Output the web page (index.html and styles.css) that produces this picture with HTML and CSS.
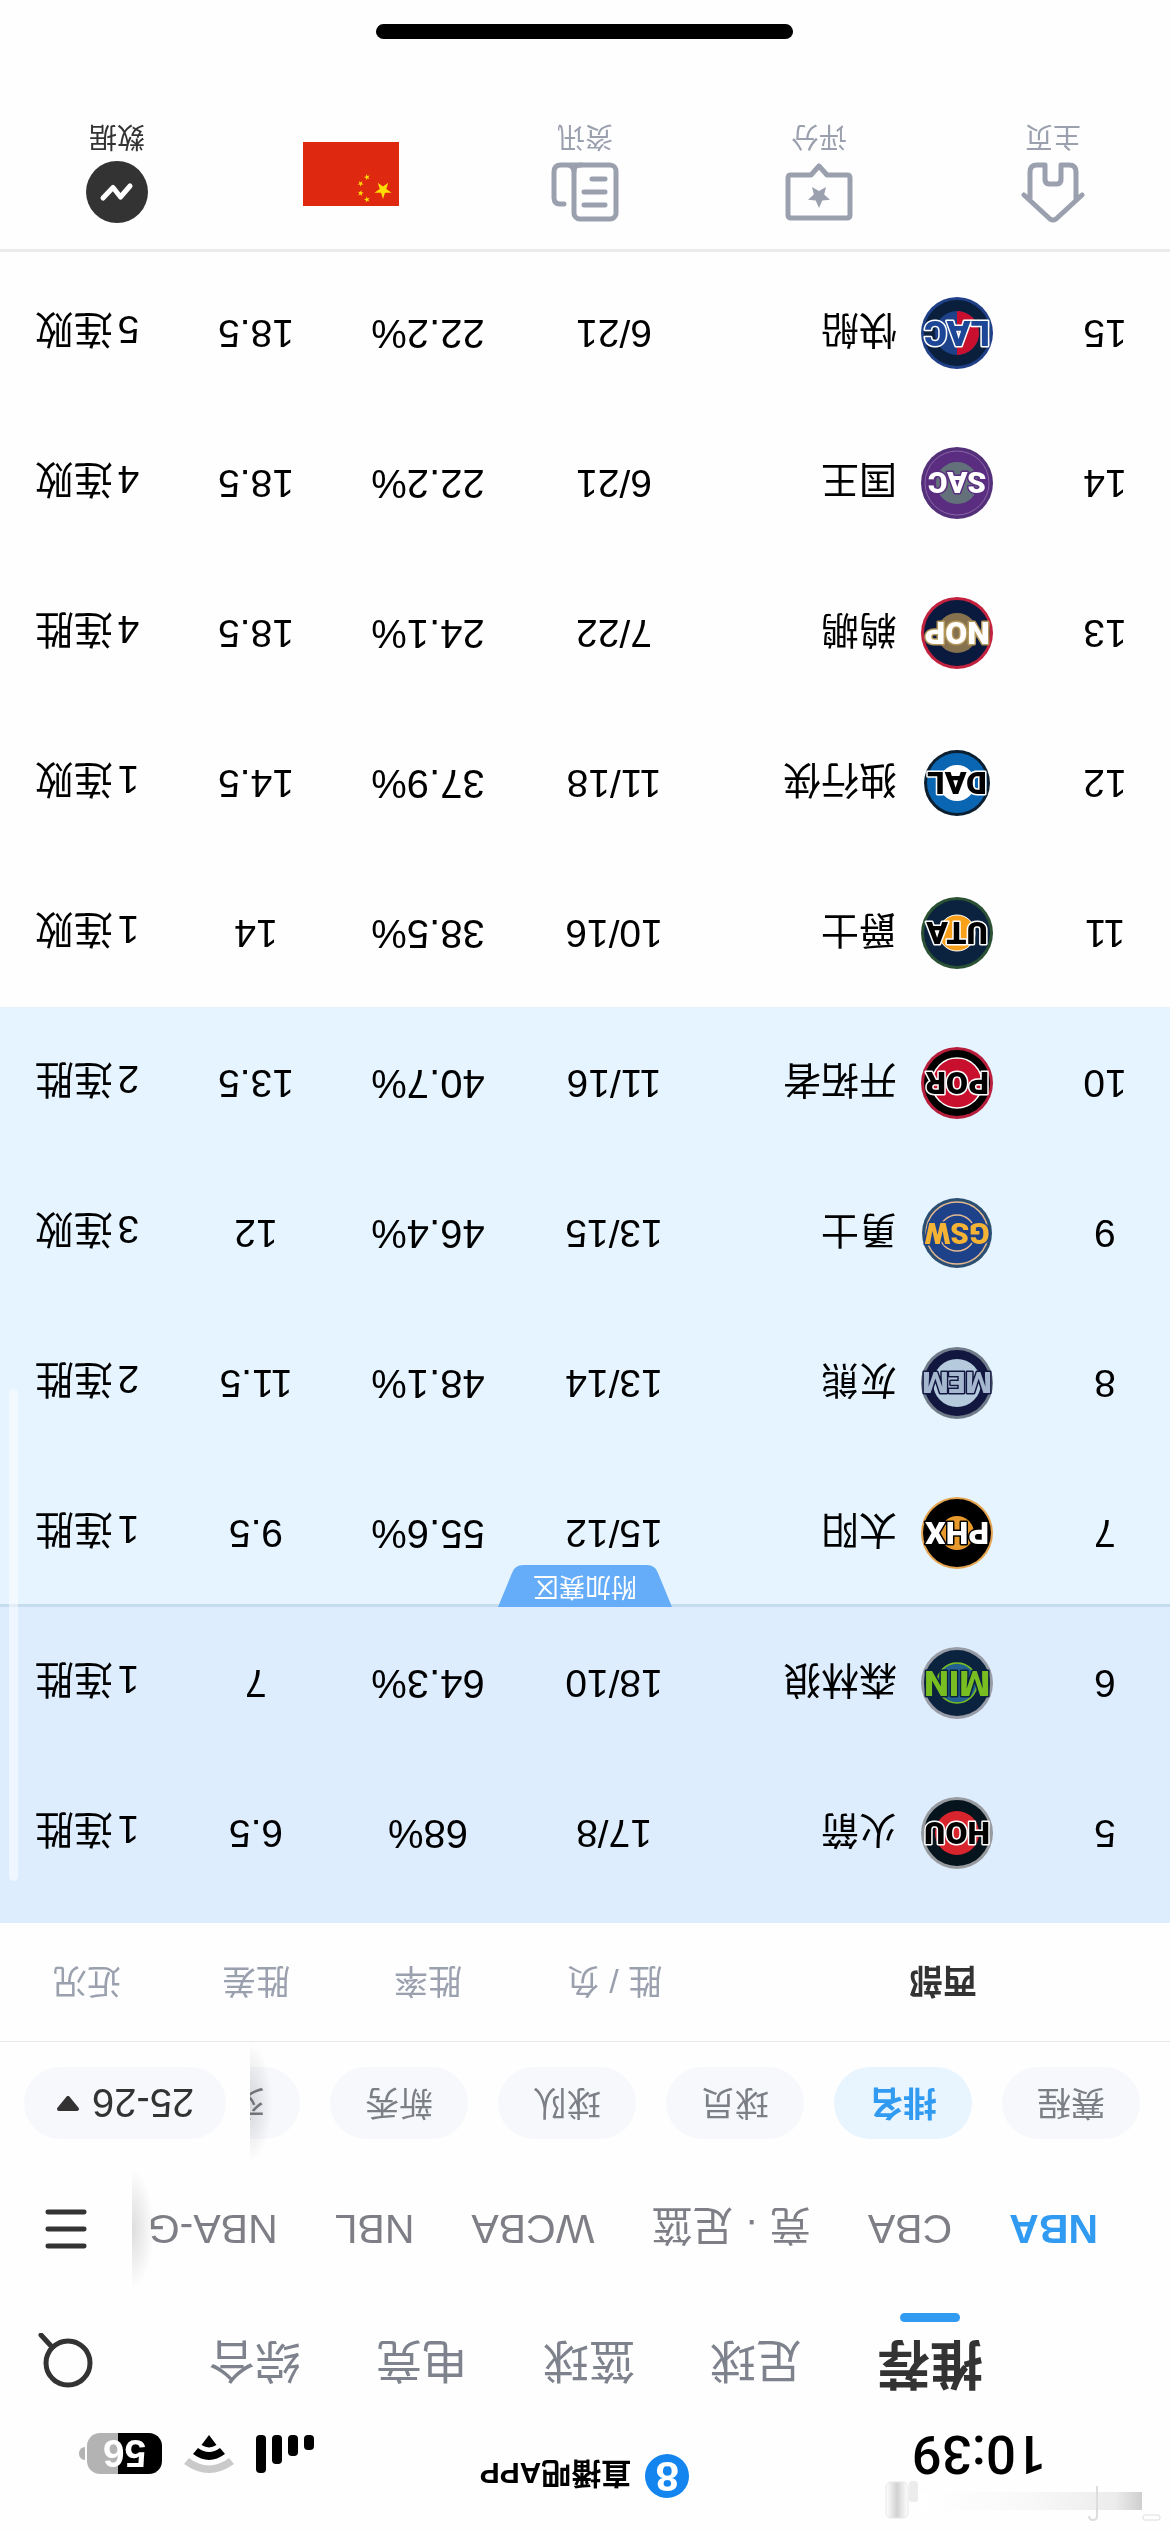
FILE: index.html
```html
<!DOCTYPE html>
<html lang="zh-CN">
<head>
    <meta charset="UTF-8">
    <meta name="viewport" content="width=device-width, initial-scale=1.0">
    <title>NBA 排名</title>
    <link rel="stylesheet" href="styles.css">
</head>
<body>
<div class="screen">
    <svg class="smudge" viewBox="0 0 290 44" aria-hidden="true">
        <defs>
            <linearGradient id="fade" x1="0" x2="1">
                <stop offset="0" stop-color="#cfcfcf"/>
                <stop offset="0.12" stop-color="#ececec"/>
                <stop offset="0.5" stop-color="#f8f8f8"/>
                <stop offset="1" stop-color="#fff"/>
            </linearGradient>
            <linearGradient id="bar" x1="0" x2="1">
                <stop offset="0" stop-color="#fff"/>
                <stop offset="0.5" stop-color="#d2d2d2"/>
                <stop offset="1" stop-color="#fff"/>
            </linearGradient>
        </defs>
        <rect x="28" y="12" width="222" height="18" fill="url(#fade)"/>
        <rect x="10" y="2" width="17" height="5" rx="2" fill="#fff" stroke="#ddd"/>
        <path d="M73 36V6q0-4 4-4t4 4" fill="none" stroke="#ddd" stroke-width="2"/>
        <rect x="262" y="4" width="22" height="36" rx="5" fill="url(#bar)" stroke="#e6e6e6"/>
        <rect x="252" y="20" width="9" height="21" rx="3" fill="#ececec"/>
    </svg>

    <header class="status">
        <time class="clock">10:39</time>
        <div class="brand">
            <span class="brand-logo">8</span>
            <span>直播吧APP</span>
        </div>
        <div class="status-icons">
            <svg width="58" height="38" viewBox="0 0 58 38">
                <rect x="0" y="23" width="10" height="15" rx="4"/>
                <rect x="16" y="17" width="10" height="21" rx="4"/>
                <rect x="32" y="9" width="10" height="29" rx="4"/>
                <rect x="48" y="0" width="10" height="38" rx="4"/>
            </svg>
            <svg width="50" height="38" viewBox="0 0 50 38">
                <path d="M0 9Q25-9 50 9L45 15Q25 0 5 15Z" fill="#cacaca"/>
                <path d="M9 19Q25 7 41 19L36 25Q25 17 14 25Z"/>
                <path d="M17.500 28Q25 23 32.500 28L25 38Z"/>
            </svg>
            <span class="battery">56</span>
        </div>
    </header>

    <nav class="tabs">
        <div class="tab-list">
            <a href="#" class="active">推荐</a>
            <a href="#">足球</a>
            <a href="#">篮球</a>
            <a href="#">电竞</a>
            <a href="#">综合</a>
        </div>
        <button class="icon-btn search" aria-label="搜索">
            <svg width="56" height="56" viewBox="0 0 56 56">
                <circle cx="26" cy="26" r="22"/>
                <path d="M42 42L53 54"/>
            </svg>
        </button>
    </nav>

    <nav class="leagues">
        <div class="league-list">
            <a href="#" class="active">NBA</a>
            <a href="#">CBA</a>
            <a href="#">竞 · 足篮</a>
            <a href="#">WCBA</a>
            <a href="#">NBL</a>
            <a href="#">NBA-G</a>
        </div>
        <div class="side">
            <button class="icon-btn menu" aria-label="菜单">
                <svg width="42" height="40" viewBox="0 0 42 40">
                    <path d="M3 3H39M3 20H39M3 37H39"/>
                </svg>
            </button>
        </div>
    </nav>

    <nav class="chips">
        <div class="chip-list">
            <a href="#">赛程</a>
            <a href="#" class="active">排名</a>
            <a href="#">球员</a>
            <a href="#">球队</a>
            <a href="#">新秀</a>
            <a href="#">交易</a>
        </div>
        <div class="side">
            <button class="season">
                25-26
                <svg width="24" height="16" viewBox="0 0 24 16">
                    <path d="M3 2H21L12 13Z"/>
                </svg>
            </button>
        </div>
    </nav>

    <main class="standings">
        <table>
            <colgroup>
                <col class="col-rank">
                <col>
                <col class="col-record">
                <col class="col-rate">
                <col class="col-diff">
                <col class="col-streak">
            </colgroup>
            <thead>
                <tr>
                    <th></th>
                    <th class="conf">西部</th>
                    <th>胜 / 负</th>
                    <th>胜率</th>
                    <th>胜差</th>
                    <th>近况</th>
                </tr>
            </thead>
            <tbody class="playoff">
                <tr class="peek"><td colspan="6"></td></tr>
                <tr>
                    <td>5</td>
                    <td><div class="team">
                        <svg class="logo" viewBox="0 0 72 72"><circle cx="36" cy="36" r="36" fill="#979b9f"/><circle cx="36" cy="36" r="33" fill="#06141d"/><circle cx="36" cy="36" r="22" fill="#d8242d"/><text x="36" y="47" fill="#000" stroke="#fff">HOU</text></svg>
                        火箭</div></td>
                    <td>17/8</td><td class="rate">68%</td><td>6.5</td><td>1连胜</td>
                </tr>
                <tr>
                    <td>6</td>
                    <td><div class="team">
                        <svg class="logo" viewBox="0 0 72 72"><circle cx="36" cy="36" r="36" fill="#979ca6"/><circle cx="36" cy="36" r="33" fill="#0c2340"/><circle cx="36" cy="36" r="20" fill="#236192" stroke="#78be20" stroke-width="1.500"/><text class="narrow" x="36" y="48" fill="#78be20" stroke="#0c2340">MIN</text></svg>
                        森林狼</div></td>
                    <td>18/10</td><td class="rate">64.3%</td><td>7</td><td>1连胜</td>
                </tr>
            </tbody>
            <tbody class="playin">
                <tr class="zone-row">
                    <td>7<span class="zone">附加赛区</span></td>
                    <td><div class="team">
                        <svg class="logo" viewBox="0 0 72 72"><circle cx="36" cy="36" r="36" fill="#e5a550"/><circle cx="36" cy="36" r="34" fill="#000"/><circle cx="36" cy="36" r="17" fill="#e79a2b"/><text x="36" y="47" fill="#fff" stroke="#000">PHX</text></svg>
                        太阳</div></td>
                    <td>15/12</td><td class="rate">55.6%</td><td>9.5</td><td>1连胜</td>
                </tr>
                <tr>
                    <td>8</td>
                    <td><div class="team">
                        <svg class="logo" viewBox="0 0 72 72"><circle cx="36" cy="36" r="36" fill="#707b8a"/><circle cx="36" cy="36" r="33" fill="#12173f"/><circle cx="36" cy="36" r="24" fill="#b5cadd"/><text class="wide" x="36" y="47" fill="#a5b6cf" stroke="#12173f">MEM</text></svg>
                        灰熊</div></td>
                    <td>13/14</td><td class="rate">48.1%</td><td>11.5</td><td>2连胜</td>
                </tr>
                <tr>
                    <td>9</td>
                    <td><div class="team">
                        <svg class="logo" viewBox="0 0 72 72"><circle cx="36" cy="36" r="35" fill="#2b4f73"/><circle cx="36" cy="36" r="31" fill="#1d428a" stroke="#e6b98f" stroke-width="1.500"/><circle cx="36" cy="36" r="18" fill="none" stroke="#e6b98f" stroke-width="1.500"/><text class="wide" x="36" y="46" fill="#f5b335" stroke="#1d428a">GSW</text></svg>
                        勇士</div></td>
                    <td>13/15</td><td class="rate">46.4%</td><td>12</td><td>3连败</td>
                </tr>
                <tr>
                    <td>10</td>
                    <td><div class="team">
                        <svg class="logo" viewBox="0 0 72 72"><circle cx="36" cy="36" r="36" fill="#b61e3c"/><circle cx="36" cy="36" r="33" fill="#000"/><circle cx="36" cy="36" r="25" fill="#c8102e" stroke="#fff" stroke-width="1.500"/><text x="36" y="47" fill="#000" stroke="#fff">POR</text></svg>
                        开拓者</div></td>
                    <td>11/16</td><td class="rate">40.7%</td><td>13.5</td><td>2连胜</td>
                </tr>
            </tbody>
            <tbody>
                <tr>
                    <td>11</td>
                    <td><div class="team">
                        <svg class="logo" viewBox="0 0 72 72"><circle cx="36" cy="36" r="36" fill="#2b5134"/><circle cx="36" cy="36" r="33" fill="#0c2340"/><circle cx="36" cy="36" r="18" fill="#f9a01b" stroke="#fff" stroke-width="1"/><text x="36" y="47" fill="#000" stroke="#fff">UTA</text></svg>
                        爵士</div></td>
                    <td>10/16</td><td class="rate">38.5%</td><td>14</td><td>1连败</td>
                </tr>
                <tr>
                    <td>12</td>
                    <td><div class="team">
                        <svg class="logo" viewBox="0 0 72 72"><circle cx="36" cy="36" r="33" fill="#0b1f30"/><circle cx="36" cy="36" r="30" fill="#0a66b2"/><circle cx="36" cy="36" r="18" fill="#fff"/><text x="36" y="47" fill="#000" stroke="#fff">DAL</text></svg>
                        独行侠</div></td>
                    <td>11/18</td><td class="rate">37.9%</td><td>14.5</td><td>1连败</td>
                </tr>
                <tr>
                    <td>13</td>
                    <td><div class="team">
                        <svg class="logo" viewBox="0 0 72 72"><circle cx="36" cy="36" r="36" fill="#c3223e"/><circle cx="36" cy="36" r="33" fill="#0a1a3f"/><circle cx="36" cy="36" r="20" fill="#85714d"/><text x="36" y="47" fill="#fff" stroke="#b4975a">NOP</text></svg>
                        鹈鹕</div></td>
                    <td>7/22</td><td class="rate">24.1%</td><td>18.5</td><td>4连胜</td>
                </tr>
                <tr>
                    <td>14</td>
                    <td><div class="team">
                        <svg class="logo" viewBox="0 0 72 72"><circle cx="36" cy="36" r="36" fill="#55307a"/><circle cx="36" cy="36" r="32" fill="#5a2d81" stroke="#8a65a8" stroke-width="1"/><circle cx="36" cy="36" r="21" fill="#63727a"/><text class="wide" x="36" y="47" fill="#fff" stroke="#5a2d81">SAC</text></svg>
                        国王</div></td>
                    <td>6/21</td><td class="rate">22.2%</td><td>18.5</td><td>4连败</td>
                </tr>
                <tr>
                    <td>15</td>
                    <td><div class="team">
                        <svg class="logo" viewBox="0 0 72 72"><circle cx="36" cy="36" r="36" fill="#1f3f87"/><circle cx="36" cy="36" r="33" fill="#0a1f3c"/><circle cx="36" cy="36" r="22" fill="#1d428a"/><path d="M36 14A22 22 0 0 0 36 58Z" fill="#c8102e"/><text class="narrow" x="36" y="48" fill="#1d4796" stroke="#fff">LAC</text></svg>
                        快船</div></td>
                    <td>6/21</td><td class="rate">22.2%</td><td>18.5</td><td>5连败</td>
                </tr>
            </tbody>
        </table>
        <div class="scrollbar"></div>
    </main>

    <footer class="bottom">
        <nav class="bottom-nav">
            <a href="#">
                <svg class="line" width="64" height="62" viewBox="0 0 64 62">
                    <path d="M3 28L29 4Q32 2 35 4L61 28M9 24V51Q9 58 16 58H24V44Q24 39 28 39H36Q40 39 40 44V58H48Q55 58 55 51V24"/>
                </svg>
                主页
            </a>
            <a href="#">
                <svg class="line" width="68" height="62" viewBox="0 0 68 62">
                    <path d="M6 5H62Q65 5 65 8V45Q65 48 62 48H42L34 57L26 48H6Q3 48 3 45V8Q3 5 6 5Z"/>
                    <path class="solid" d="M34 15L37.300 22.500L45 23.200L39.200 28.500L41 36L34 32L27 36L28.800 28.500L23 23.200L30.700 22.500Z"/>
                </svg>
                评分
            </a>
            <a href="#">
                <svg class="line" width="68" height="62" viewBox="0 0 68 62">
                    <rect x="3" y="4" width="42" height="54" rx="6"/>
                    <path d="M14 18H35M14 31H35M14 44H27M55 19H59Q65 19 65 25V51Q65 58 58 58H38M45 52Q46 58 52 58"/>
                </svg>
                资讯
            </a>
            <a href="#" class="flag" aria-label="中国">
                <svg width="96" height="64" viewBox="0 0 30 20">
                    <defs>
                        <path id="star" d="M0-1L.2245-.309L.9511-.309L.3633.118L.5878.809L0 .382L-.5878.809L-.3633.118L-.9511-.309L-.2245-.309Z" fill="#ffde00"/>
                    </defs>
                    <rect width="30" height="20" fill="#de2910"/>
                    <use href="#star" transform="translate(5 5) scale(2.800)"/>
                    <use href="#star" transform="translate(10 2) rotate(21)"/>
                    <use href="#star" transform="translate(12 4) rotate(46)"/>
                    <use href="#star" transform="translate(12 7) rotate(70)"/>
                    <use href="#star" transform="translate(10 9) rotate(20)"/>
                </svg>
            </a>
            <a href="#" class="active">
                <svg width="62" height="62" viewBox="0 0 62 62">
                    <circle cx="31" cy="31" r="31" fill="#333"/>
                    <path d="M18 37L27.500 26L35 35.500L45 25" fill="none" stroke="#fff" stroke-width="5" stroke-linecap="round" stroke-linejoin="round"/>
                </svg>
                数据
            </a>
        </nav>
        <div class="home-indicator"></div>
    </footer>
</div>
</body>
</html>
```
FILE: styles.css
```css
* {
    box-sizing: border-box;
}
body {
    margin: 0;
    background-color: #fefefe;
    color: #000;
    font-family: "Liberation Sans", "Noto Sans CJK SC", sans-serif;
}
a {
    color: inherit;
    text-decoration: none;
}
button {
    border: 0;
    padding: 0;
    background: none;
    font-family: inherit;
}
svg {
    display: block;
    flex: none;
}

/* the screen is shown upside down */
.screen {
    position: relative;
    min-height: 100vh;
    display: flex;
    flex-direction: column;
    transform: rotate(180deg);
}
.smudge {
    position: absolute;
    left: 0;
    top: 10px;
    width: 290px;
    height: 44px;
}

/* status bar */
.status {
    height: 122px;
    padding: 34px 79px 0 124px;
    display: grid;
    grid-template-columns: 1fr auto 1fr;
    align-items: center;
}
.clock {
    font-family: Roboto, sans-serif;
    font-size: 53px;
    font-weight: 500;
}
.brand {
    display: flex;
    align-items: center;
    align-self: start;
    gap: 14px;
    height: 44px;
    font-size: 30px;
    font-weight: bold;
    margin-right: 44px;
}
.brand-logo {
    width: 44px;
    height: 44px;
    border-radius: 50%;
    background-color: #1485ee;
    color: #fff;
    font-size: 42px;
    line-height: 44px;
    text-align: center;
}
.status-icons {
    display: flex;
    align-items: center;
    justify-content: flex-end;
    gap: 22px;
}
.battery {
    position: relative;
    width: 75px;
    height: 41px;
    margin-right: 8px;
    border-radius: 13px;
    background: linear-gradient(to right, #000 44px, #b3b3b3 44px);
    color: #fff;
    font-size: 39px;
    font-weight: bold;
    line-height: 42px;
    text-align: center;
}
.battery::after {
    content: "";
    position: absolute;
    right: -8px;
    top: 14px;
    width: 6px;
    height: 13px;
    border-radius: 0 6px 6px 0;
    background-color: #b3b3b3;
}

/* sport tabs */
.tabs {
    height: 106px;
    padding: 17px 38px 0 187px;
    display: flex;
    justify-content: space-between;
}
.tab-list {
    display: flex;
    align-items: baseline;
    gap: 75px;
    font-size: 46px;
    line-height: 60px;
    color: #7e828c;
}
.tab-list .active {
    font-size: 53px;
    font-weight: bold;
    color: #333;
}
.tab-list .active::after {
    content: "";
    display: block;
    width: 60px;
    height: 9px;
    margin: 11px auto 0;
    border-radius: 5px;
    background-color: #319bf2;
}
.icon-btn svg {
    fill: none;
    stroke: #333;
    stroke-width: 5;
    stroke-linecap: round;
}
.search {
    align-self: flex-start;
    padding-top: 4px;
}

/* leagues */
.leagues,
.chips {
    display: flex;
}
.leagues {
    height: 150px;
}
.league-list,
.chip-list {
    flex: 1;
    min-width: 0;
    display: flex;
    align-items: center;
    overflow: hidden;
    white-space: nowrap;
}
.league-list {
    gap: 57px;
    padding-left: 72px;
    font-size: 41px;
    color: #7e7f86;
}
.league-list .active {
    color: #319bf2;
    font-weight: bold;
}
.side {
    position: relative;
    display: flex;
    align-items: center;
    background-color: #fefefe;
}
.side::before {
    content: "";
    position: absolute;
    top: 50%;
    right: 100%;
    width: 22px;
    height: 120px;
    margin-top: -60px;
    background: radial-gradient(farthest-side at 100% 50%, rgba(0, 0, 0, 0.13), transparent);
}
.leagues .side {
    padding: 0 45px;
}

/* filter chips */
.chips {
    height: 112px;
    padding-bottom: 10px;
}
.chip-list {
    gap: 30px;
    padding-left: 30px;
}
.chip-list a,
.season {
    flex: none;
    height: 72px;
    padding: 0 35px;
    border-radius: 36px;
    background-color: #f6f8fb;
    color: #7c7f85;
    font-size: 34px;
    line-height: 72px;
}
.chip-list .active {
    background-color: #e8f4fe;
    color: #319bf2;
    font-weight: bold;
}
.chips .side {
    padding: 0 24px;
}
.season {
    display: flex;
    align-items: center;
    gap: 12px;
    padding: 0 32px;
    color: #333;
    font-size: 40px;
}
.season svg {
    fill: #333;
    stroke: #333;
    stroke-width: 4;
    stroke-linejoin: round;
}

/* standings */
.standings {
    position: relative;
    border-top: 1px solid #e6e7e9;
}
table {
    width: 100%;
    table-layout: fixed;
    border-collapse: collapse;
}
.col-rank { width: 130px; }
.col-record { width: 192px; }
.col-rate { width: 180px; }
.col-diff { width: 164px; }
.col-streak { width: 174px; }
th {
    height: 118px;
    padding: 0 0 4px;
    color: #9aa0ad;
    font-size: 34px;
    font-weight: normal;
}
th.conf {
    padding-left: 63px;
    color: #333;
    font-weight: bold;
    text-align: left;
}
td {
    height: 150px;
    padding: 0 0 3px;
    font-size: 39px;
    text-align: center;
    text-autospace: normal;
    white-space: nowrap;
}
.rate {
    font-size: 40px;
}
.peek td {
    height: 16px;
    padding: 0;
}
.playoff {
    background-color: #ddedfe;
}
.playin {
    background-color: #e5f4ff;
}
.zone-row {
    position: relative;
    box-shadow: inset 0 3px #c5dbee;
}
.zone {
    position: absolute;
    top: 0;
    left: 50%;
    width: 174px;
    height: 42px;
    margin-left: -87px;
    background-color: #65adf9;
    clip-path: path("M0 0H174L160 34Q157 42 149 42H25Q17 42 14 34Z");
    color: #fff;
    font-size: 26px;
    line-height: 40px;
}
.team {
    display: flex;
    align-items: center;
    gap: 24px;
    padding-left: 47px;
    font-size: 38px;
}
.logo {
    width: 72px;
    height: 72px;
    overflow: visible;
}
.logo text {
    font-family: Roboto, sans-serif;
    font-size: 32px;
    font-weight: 900;
    text-anchor: middle;
    paint-order: stroke;
    stroke-width: 3px;
    stroke-linejoin: round;
}
.logo .wide {
    font-size: 30px;
}
.logo .narrow {
    font-size: 35px;
}
.scrollbar {
    position: absolute;
    top: 160px;
    right: 9px;
    width: 9px;
    height: 492px;
    border-radius: 5px;
    background-color: rgba(255, 255, 255, 0.5);
}

/* bottom bar */
.bottom {
    margin-top: auto;
    border-top: 3px solid #ebebeb;
}
.bottom-nav {
    display: flex;
    padding-top: 26px;
}
.bottom-nav a {
    flex: 1;
    display: flex;
    flex-direction: column;
    align-items: center;
    gap: 7px;
    color: #9aa0ae;
    font-size: 28px;
    line-height: 36px;
}
.bottom-nav .active {
    color: #333;
}
.bottom-nav .flag {
    padding-top: 17px;
}
.line {
    fill: none;
    stroke: #9aa0ae;
    stroke-width: 5;
    stroke-linecap: round;
    stroke-linejoin: round;
}
.line .solid {
    fill: #9aa0ae;
    stroke: none;
}
.home-indicator {
    width: 417px;
    height: 15px;
    margin: 79px auto 24px;
    border-radius: 8px;
    background-color: #000;
}
```
